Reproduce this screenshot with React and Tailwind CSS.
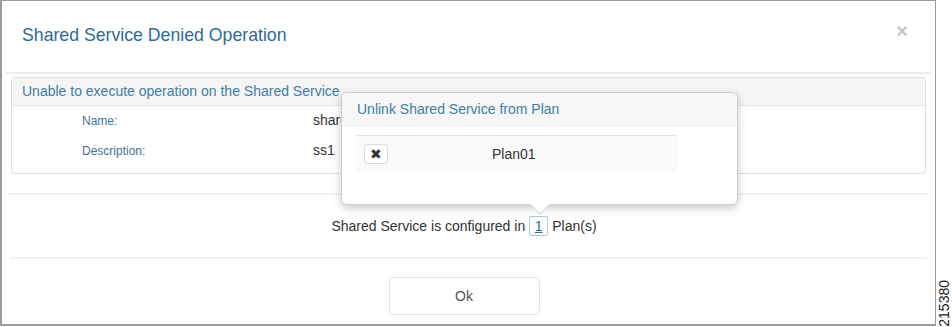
import React from "react";

export default function App() {
  return (
    <div className="relative w-[952px] h-[327px] bg-white flex font-['Liberation_Sans',Arial,sans-serif] overflow-hidden">
      <div className="w-[936px] h-[326px] border-t border-l-2 border-r border-b-2 border-[#9b9b9b] flex flex-col">
        {/* Header */}
        <div className="h-[71px] flex items-center justify-between pl-[20px] pr-[27px]">
          <div className="text-[17.7px] text-[#2f6b90] pb-[3px]">Shared Service Denied Operation</div>
          <div className="text-[20px] leading-none text-[#c4c4c4] font-bold pb-[12px]">×</div>
        </div>
        <div className="mx-[4px] h-[2px] bg-[#ededed]" />

        {/* Panel */}
        <div className="mx-[9px] mt-[3px] h-[97px] border border-[#dedede] rounded-[4px] flex flex-col">
          <div className="h-[28px] bg-[#f5f5f5] border-b border-[#e6e6e6] rounded-t-[4px] flex items-center pl-[10px] text-[14px] text-[#3f7ea5]">
            Unable to execute operation on the Shared Service
          </div>
          <div className="h-[29px] flex items-center">
            <div className="w-[301px] pl-[70px] text-[12px] text-[#3f7297]">Name:</div>
            <div className="w-[28px] overflow-hidden whitespace-nowrap text-[14px] text-[#333]">shared_service1</div>
          </div>
          <div className="h-[31px] flex items-center">
            <div className="w-[301px] pl-[70px] text-[12px] text-[#3f7297]">Description:</div>
            <div className="text-[14px] text-[#333]">ss1</div>
          </div>
        </div>

        <div className="mx-[6px] mt-[19px] h-[2px] bg-[#f0f0f0]" />
        <div className="h-[62px] flex items-center justify-center pr-[9px] text-[14px] text-[#333]">
          <span>Shared Service is configured in</span>
          <span className="mx-[4px] inline-flex items-center justify-center w-[19px] h-[20px] border border-[#a9cbe6] rounded-[2px] text-[#2f6b90] underline">1</span>
          <span>Plan(s)</span>
        </div>
        <div className="mx-[8px] h-[2px] bg-[#f0f0f0]" />

        <div className="flex justify-center pt-[18px] pr-[9px]">
          <div className="w-[151px] h-[38px] border border-[#e3e3e3] rounded-[4px] flex items-center justify-center text-[14px] text-[#555] bg-white">
            Ok
          </div>
        </div>
      </div>

      {/* Figure number */}
      <div className="flex-1 flex flex-col justify-end items-center">
        <div className="[writing-mode:vertical-rl] rotate-180 text-[14px] leading-none text-[#222]">215380</div>
      </div>

      {/* Popover */}
      <div className="absolute left-[341px] top-[92px] w-[397px] h-[113px] bg-white border border-[#cfcfcf] rounded-[6px] shadow-[0_3px_8px_rgba(0,0,0,0.22)]">
        <div className="h-[33px] bg-[#f7f7f7] border-b border-[#ebebeb] rounded-t-[6px] flex items-center pl-[15px] text-[14px] text-[#3f7ea5]">
          Unlink Shared Service from Plan
        </div>
        <div className="ml-[14px] mt-[9px] w-[321px] border-t border-[#e2e2e2] h-[37px] bg-[#fafafa] flex items-center">
          <div className="ml-[8px] w-[24px] h-[20px] border border-[#dcdcdc] rounded-[2px] bg-white flex items-center justify-center text-[14px] leading-none text-[#333]">✖</div>
          <div className="ml-[104px] text-[14px] text-[#333]">Plan01</div>
        </div>
        <div className="absolute left-[191px] bottom-[-8px] w-[14px] h-[14px] bg-white border-r border-b border-[#cfcfcf] rotate-45" />
      </div>
    </div>
  );
}
